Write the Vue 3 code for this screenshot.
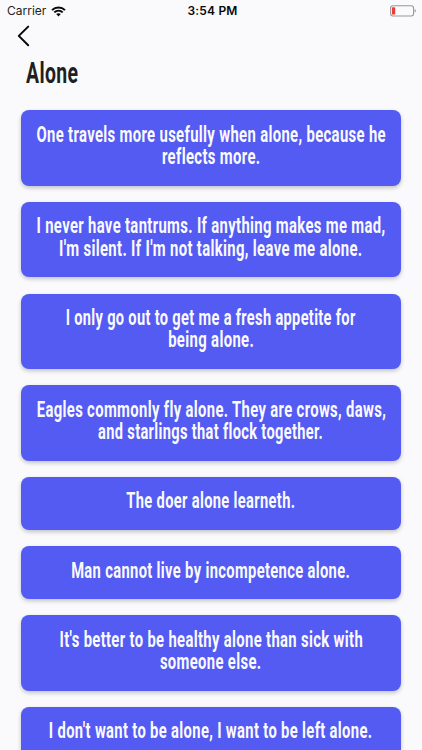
<template>
  <main class="screen">
    <header class="status-bar">
      <div class="carrier">
        <span>Carrier</span>
        <svg class="wifi" width="15" height="11" viewBox="0 0 15 11">
          <path d="M1 4.1C4.6.5 10.4.5 14 4.1" />
          <path d="M3.3 6.4c2.4-2.3 6-2.3 8.4 0" />
          <path class="wifi-dot" d="M5.2 8.1c1.3-1.1 3.3-1.1 4.6 0L7.5 10.5z" />
        </svg>
      </div>
      <span class="time">3:54 PM</span>
      <svg class="battery" width="27" height="12" viewBox="0 0 27 12">
        <rect class="battery-shell" x="0.6" y="0.8" width="23" height="10.2" rx="2.4" />
        <rect class="battery-level" x="2" y="2.2" width="3.2" height="7.4" rx="0.7" />
        <path class="battery-tip" d="M24.7 4.1c1.6.6 1.6 3 0 3.6z" />
      </svg>
    </header>

    <button class="back" aria-label="Back">
      <svg width="14" height="22" viewBox="0 0 14 22">
        <path d="M12.2 1.6 2.8 10.9 12.2 20.2" />
      </svg>
    </button>

    <h1 class="title"><span class="fit" data-width="52.5">Alone</span></h1>

    <section class="quotes">
      <article v-for="(quote, i) in quotes" :key="i" class="card">
        <p v-for="line in quote" :key="line.text" class="line">
          <span class="fit" :data-width="line.width">{{ line.text }}</span>
        </p>
      </article>
    </section>
  </main>
</template>

<script setup>
import { onMounted } from "vue";

const quotes = [
  [
    { text: "One travels more usefully when alone, because he", width: 349.5 },
    { text: "reflects more.", width: 98.5 },
  ],
  [
    { text: "I never have tantrums. If anything makes me mad,", width: 349 },
    { text: "I'm silent. If I'm not talking, leave me alone.", width: 303.5 },
  ],
  [
    { text: "I only go out to get me a fresh appetite for", width: 290 },
    { text: "being alone.", width: 86 },
  ],
  [
    { text: "Eagles commonly fly alone. They are crows, daws,", width: 349.5 },
    { text: "and starlings that flock together.", width: 225 },
  ],
  [{ text: "The doer alone learneth.", width: 169 }],
  [{ text: "Man cannot live by incompetence alone.", width: 279 }],
  [
    { text: "It's better to be healthy alone than sick with", width: 303.5 },
    { text: "someone else.", width: 101.5 },
  ],
  [{ text: "I don't want to be alone, I want to be left alone.", width: 323.5 }],
];

// Condense each line to its width
onMounted(() => {
  document.querySelectorAll(".fit").forEach((el) => {
    const natural = el.getBoundingClientRect().width;
    el.style.transform = `scaleX(${Number(el.dataset.width) / natural})`;
  });
});
</script>

<style scoped>
.screen {
  height: 750px;
  overflow: hidden;
  background-color: #fafafd;
  color: #1e1f23;
  font-family: Roboto, "Liberation Sans", sans-serif;
}

.status-bar {
  display: grid;
  grid-template-columns: 1fr auto 1fr;
  align-items: center;
  height: 22px;
  padding: 0 5px 0 7px;
  box-sizing: border-box;
  font-family: Inter, sans-serif;
  font-size: 12px;
  line-height: 22px;
}

.carrier {
  display: flex;
  align-items: center;
  gap: 5px;
}

.wifi {
  fill: none;
  stroke: #08080a;
  stroke-width: 2;
}

.wifi .wifi-dot {
  fill: #08080a;
  stroke: none;
}

.time {
  padding-left: 1px;
  color: #08080a;
  font-weight: 600;
  letter-spacing: 0.2px;
}

.battery {
  justify-self: end;
}

.battery-shell {
  fill: none;
  stroke: #98989b;
  stroke-width: 1.1;
}

.battery-level {
  fill: #f23a35;
}

.battery-tip {
  fill: #98989b;
}

.back {
  display: block;
  height: 28px;
  margin-left: 16px;
  padding: 0;
  border: none;
  background: none;
  cursor: pointer;
}

.back svg {
  display: block;
  fill: none;
  stroke: #08080a;
  stroke-width: 2;
  stroke-linecap: round;
  stroke-linejoin: round;
}

.title {
  height: 36px;
  margin: 5px 0 0 25.5px;
  font-size: 30px;
  font-weight: 700;
  line-height: 36px;
  letter-spacing: 0.6px;
}

.fit {
  display: inline-block;
  flex-shrink: 0;
  white-space: nowrap;
}

.title .fit {
  transform-origin: left center;
}

.quotes {
  display: flex;
  flex-direction: column;
  gap: 16.4px;
  padding: 19.3px 20.7px 0;
}

.card {
  flex-shrink: 0;
  padding: 13.3px 0 17px;
  border-radius: 8px;
  background-color: #535bf3;
  box-shadow: 0 2px 4px rgba(0, 0, 0, 0.22);
  color: #fafafd;
}

.line {
  display: flex;
  justify-content: center;
  margin: 0;
  font-size: 21.5px;
  font-weight: 700;
  line-height: 22.5px;
  letter-spacing: 0.5px;
}
</style>

<style>
body {
  margin: 0;
  background-color: #fafafd;
}
</style>
